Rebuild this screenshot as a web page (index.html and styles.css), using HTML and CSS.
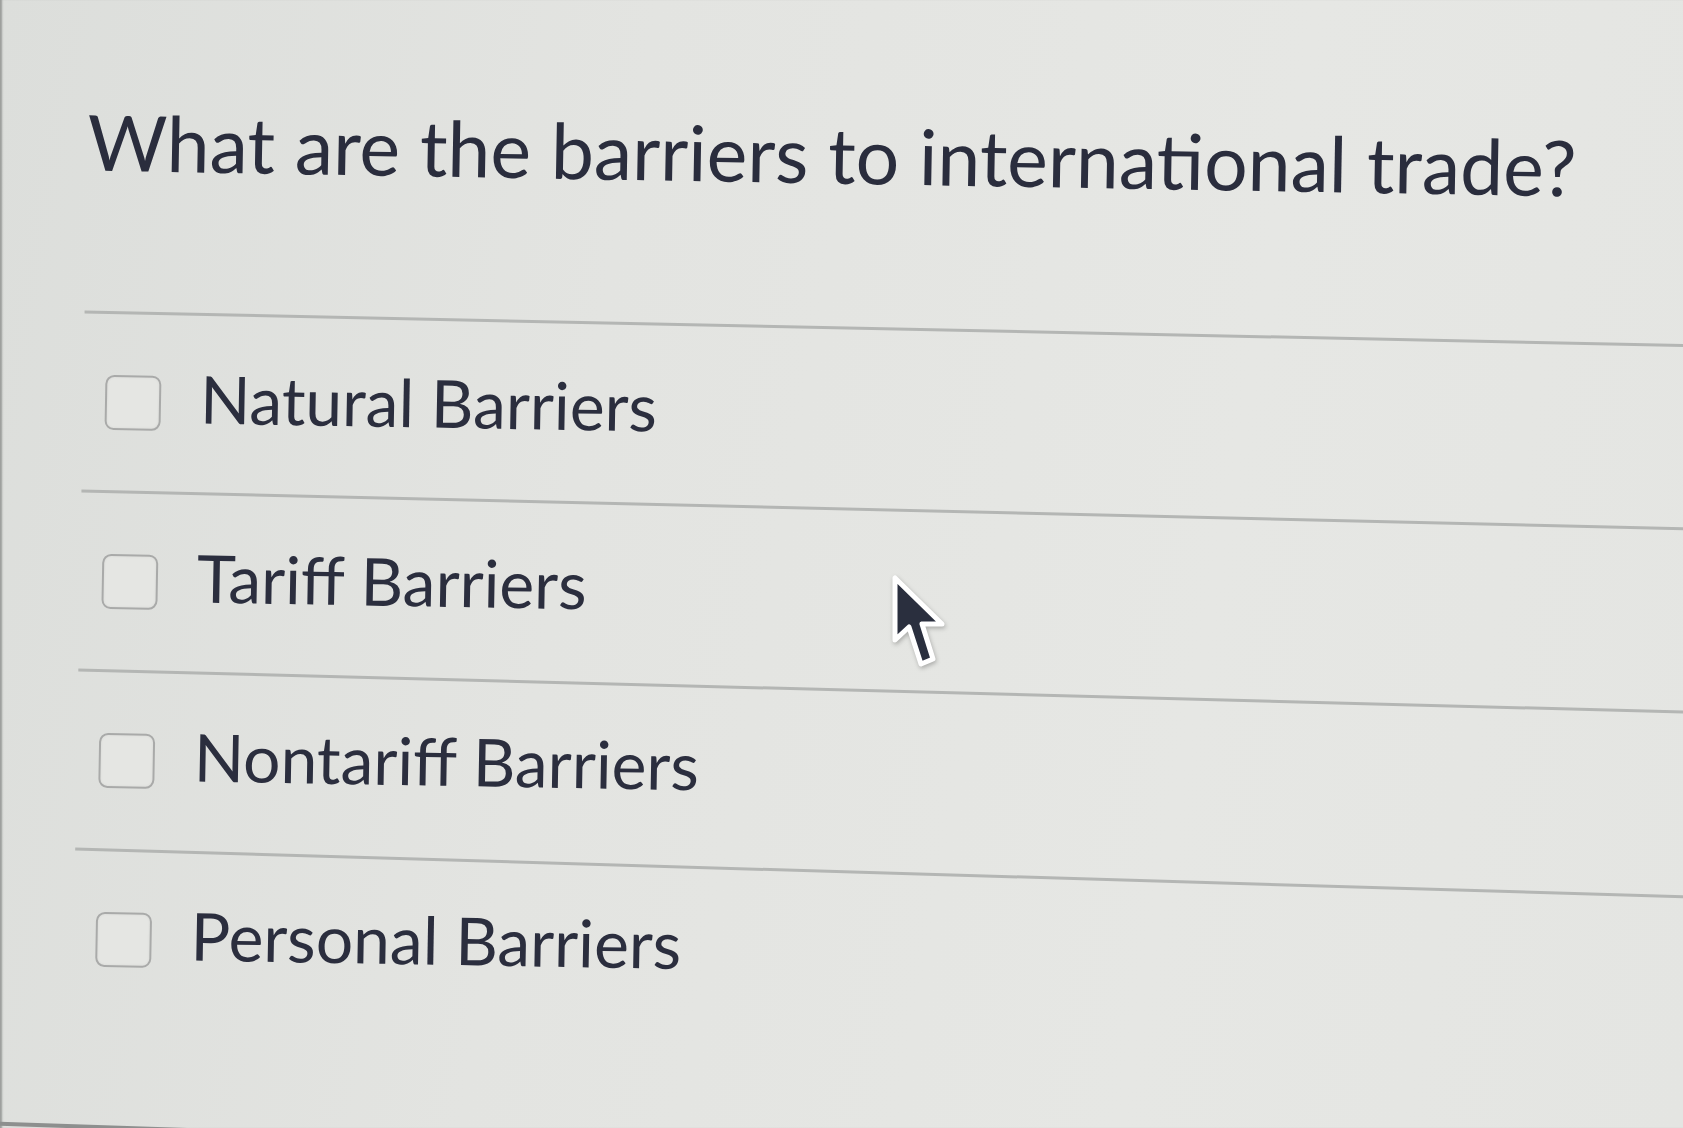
FILE: index.html
```html
<!DOCTYPE html>
<html lang="en">
<head>
<meta charset="utf-8">
<title>Quiz question</title>
<link rel="stylesheet" href="styles.css">
</head>
<body>
<div class="screen">
  <div class="quiz">
    <h1 class="question">What are the barriers to international trade?</h1>
    <div class="answers">
      <div class="rule r1"></div>
      <label class="answer"><span class="box"></span><span class="label">Natural Barriers</span></label>
      <div class="rule r2"></div>
      <label class="answer"><span class="box"></span><span class="label">Tariff Barriers</span></label>
      <div class="rule r3"></div>
      <label class="answer"><span class="box"></span><span class="label">Nontariff Barriers</span></label>
      <div class="rule r4"></div>
      <label class="answer"><span class="box"></span><span class="label">Personal Barriers</span></label>
    </div>
    <div class="footer-rule"></div>
  </div>
  <svg class="cursor" width="64" height="104" viewBox="-6 -6 64 104" aria-hidden="true">
    <path d="M0 0 L0 62 L14 49 L26 86 L38 81 L27 46 L47 46 Z" fill="#2a2f3e" stroke="#ffffff" stroke-width="5" stroke-linejoin="round"/>
  </svg>
</div>
</body>
</html>
```

FILE: styles.css
```css
html, body {
  margin: 0;
  padding: 0;
}

body {
  width: 1683px;
  height: 1128px;
  overflow: hidden;
  background: #e2e3e0;
}

.screen {
  position: relative;
  width: 1683px;
  height: 1128px;
  overflow: hidden;
  background: linear-gradient(100deg, #dcdedb 0%, #e3e4e1 35%, #e6e7e4 70%, #e4e5e2 100%);
  box-shadow: inset 3px 0 2px -1px #9a9c9a;
}

.quiz {
  width: 2000px;
  padding-left: 90px;
  padding-top: 91px;
  transform: rotate(1deg);
  transform-origin: 0 0;
  font-family: Lato, "Open Sans", "Liberation Sans", sans-serif;
  color: #2b2e3e;
}

.question {
  margin: 0;
  font-size: 77px;
  font-weight: 400;
  line-height: 96px;
  color: #2a2d3d;
}

.answers {
  margin-top: 122px;
}

.rule {
  height: 3px;
  background: #b4b6b4;
  transform-origin: 0 50%;
}

.r1 { transform: rotate(0.2deg); }
.r2 { transform: rotate(0.35deg); }
.r3 { transform: rotate(0.5deg); }
.r4 { transform: rotate(0.7deg); }

.answer {
  display: flex;
  align-items: flex-start;
  height: 176px;
}

.box {
  flex: none;
  width: 52px;
  height: 51px;
  margin-top: 61px;
  margin-left: 22px;
  border: 2px solid #a9aaa9;
  border-radius: 9px;
  background: #e5e6e3;
  box-shadow: inset 0 0 3px rgba(0, 0, 0, 0.06);
}

.label {
  margin-top: 43px;
  margin-left: 39px;
  font-size: 66px;
  line-height: 79px;
  color: #2b2e3e;
}

.footer-rule {
  margin-top: 96px;
  margin-left: -110px;
  height: 4px;
  background: #8d8f8e;
  transform: rotate(0.9deg);
  transform-origin: 0 50%;
}

.cursor {
  position: absolute;
  left: 889px;
  top: 572px;
  overflow: visible;
  filter: drop-shadow(1px 2px 2px rgba(0, 0, 0, 0.25));
}
```
